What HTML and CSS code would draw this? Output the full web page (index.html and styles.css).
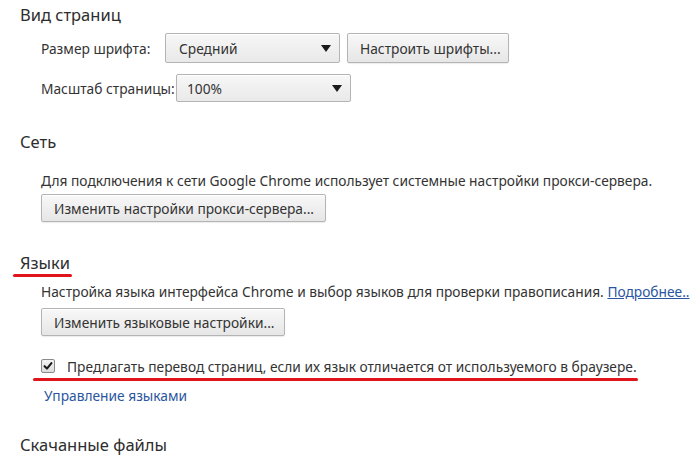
FILE: index.html
```html
<!DOCTYPE html>
<html lang="ru">
<head>
<meta charset="utf-8">
<link rel="stylesheet" href="styles.css">
</head>
<body>
<div class="page">
  <section class="sec sec-view">
    <h2 class="title">Вид страниц</h2>
    <div class="row row-font">
      <span class="label">Размер шрифта:</span>
      <div class="select sel-font"><span>Средний</span><i class="arrow"></i></div>
      <div class="btn btn-fonts">Настроить шрифты...</div>
    </div>
    <div class="row row-zoom">
      <span class="label">Масштаб страницы:</span>
      <div class="select sel-zoom"><span>100%</span><i class="arrow"></i></div>
    </div>
  </section>

  <section class="sec sec-net">
    <h2 class="title">Сеть</h2>
    <p class="text">Для подключения к сети Google Chrome использует системные настройки прокси-сервера.</p>
    <div class="btn btn-proxy">Изменить настройки прокси-сервера...</div>
  </section>

  <section class="sec sec-lang">
    <h2 class="title title-mark">Языки<span class="mark mark-title"></span></h2>
    <p class="text">Настройка языка интерфейса Chrome и выбор языков для проверки правописания. <a class="link link-under">Подробнее..</a></p>
    <div class="btn btn-lang">Изменить языковые настройки...</div>
    <div class="check-row">
      <span class="checkbox"><svg viewBox="0 0 14 14" width="14" height="14"><path d="M3 7.2 L5.8 10 L11 3.6" fill="none" stroke="#1a1a1a" stroke-width="2.4" stroke-linecap="round" stroke-linejoin="round"/></svg></span>
      <span class="check-text">Предлагать перевод страниц, если их язык отличается от используемого в браузере.</span>
      <span class="mark mark-check"></span>
    </div>
    <a class="link link-manage">Управление языками</a>
  </section>

  <section class="sec sec-dl">
    <h2 class="title">Скачанные файлы</h2>
  </section>
</div>
</body>
</html>
```
FILE: styles.css
```css
html, body {
  margin: 0;
  padding: 0;
  background: #ffffff;
}
body {
  font-family: "Noto Sans", "Open Sans", "DejaVu Sans", sans-serif;
  color: #333333;
  font-size: 13.75px;
}
.page {
  width: 700px;
  height: 459px;
  overflow: hidden;
  padding: 4px 0 0 20px;
  box-sizing: border-box;
  white-space: nowrap;
}
.sec {
  display: flex;
  flex-direction: column;
  align-items: flex-start;
}
.title {
  margin: 0;
  font-size: 16.5px;
  font-weight: normal;
  line-height: 22px;
  color: #2d2d2d;
  position: relative;
}
.row {
  display: flex;
  align-items: center;
  margin-left: 21px;
}
.row-font { margin-top: 7px; height: 30px; }
.row-zoom { margin-top: 11px; height: 28px; }
.label {
  flex: none;
  color: #333;
}
.row-font .label { width: 124px; }
.row-zoom .label { width: 135px; }
.select {
  flex: none;
  display: flex;
  align-items: center;
  justify-content: space-between;
  box-sizing: border-box;
  height: 100%;
  border: 1px solid #b4b4b4;
  border-radius: 2px;
  background: linear-gradient(#f7f7f7, #e9e9e9);
  padding: 0 8px 0 13px;
  color: #333;
  box-shadow: inset 0 1px 0 #fff;
}
.sel-font { width: 175px; }
.sel-zoom { width: 175px; padding-left: 10px; }
.arrow {
  width: 0;
  height: 0;
  border-left: 5.5px solid transparent;
  border-right: 5.5px solid transparent;
  border-top: 7px solid #1a1a1a;
}
.btn {
  flex: none;
  display: flex;
  align-items: center;
  box-sizing: border-box;
  border: 1px solid #b4b4b4;
  border-radius: 2px;
  background: linear-gradient(#f8f8f8, #e6e6e6);
  color: #333;
  padding: 0 12px;
  box-shadow: inset 0 1px 0 #fff, 0 1px 1px rgba(0,0,0,0.08);
}
.btn-fonts {
  margin-left: 7px;
  height: 30px;
  width: 162px;
}
.sec-net { margin-top: 29px; }
.text {
  margin: 18px 0 0 21px;
  line-height: 20px;
  color: #333;
}
.btn-proxy {
  margin: 3px 0 0 21px;
  height: 28px;
  width: 285px;
}
.sec-lang { margin-top: 30px; }
.sec-lang .text { margin-top: 8px; }
.btn-lang {
  margin: 6px 0 0 21px;
  height: 28px;
  width: 244px;
}
.link {
  color: #2a56a0;
  cursor: pointer;
}
.link-under { text-decoration: underline; }
.check-row {
  position: relative;
  display: flex;
  align-items: center;
  margin: 20px 0 0 21px;
  height: 20px;
}
.checkbox {
  width: 14px;
  height: 14px;
  box-sizing: border-box;
  border: 1px solid #8a8a8a;
  border-radius: 2px;
  background: linear-gradient(#f4f4f4, #dcdcdc);
  display: flex;
  align-items: center;
  justify-content: center;
  margin-right: 12px;
}
.checkbox svg { display: block; }
.check-text {
  color: #333;
}
.mark {
  position: absolute;
  height: 3px;
  background: #e0141b;
  border-radius: 2px;
}
.mark-title {
  left: -7px;
  width: 59px;
  bottom: -3px;
}
.mark-check {
  left: -8px;
  width: 605px;
  bottom: -5px;
}
.link-manage {
  margin: 10px 0 0 24px;
  line-height: 20px;
}
.sec-dl { margin-top: 28px; }
```
